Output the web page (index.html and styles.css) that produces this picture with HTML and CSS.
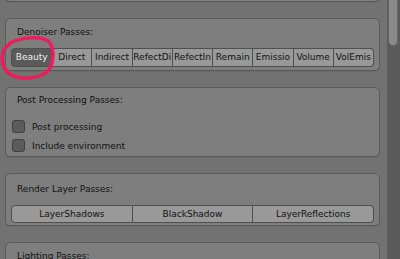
FILE: index.html
```html
<!DOCTYPE html>
<html lang="en">
<head>
    <meta charset="UTF-8">
    <title>Render Passes</title>
    <link rel="stylesheet" href="styles.css">
</head>
<body>
    <div class="content">
        <div class="box box-top"></div>

        <div class="box box-denoise">
            <div class="box-label">Denoiser Passes:</div>
            <div class="btn-row">
                <span class="btn active">Beauty</span>
                <span class="btn">Direct</span>
                <span class="btn">Indirect</span>
                <span class="btn">RefectDi</span>
                <span class="btn">RefectIn</span>
                <span class="btn">Remain</span>
                <span class="btn">Emissio</span>
                <span class="btn">Volume</span>
                <span class="btn">VolEmis</span>
            </div>
            <!-- hand drawn marker around the selected button -->
            <svg class="marker" width="60" height="50" viewBox="0 0 60 50">
                <path d="M10 7 C 22 1, 40 0, 48 5 C 54 10, 54 22, 51 30 C 47 39, 36 43, 22 42 C 12 41, 5 36, 3 28 C 1 20, 3 12, 10 8" fill="none" stroke="#ec1c5e" stroke-width="3.5" stroke-linecap="round"/>
            </svg>
        </div>

        <div class="box box-post">
            <div class="box-label">Post Processing Passes:</div>
            <label class="check"><span class="check-box"></span>Post processing</label>
            <label class="check"><span class="check-box"></span>Include environment</label>
        </div>

        <div class="box box-render">
            <div class="box-label">Render Layer Passes:</div>
            <div class="btn-row">
                <span class="btn">LayerShadows</span>
                <span class="btn">BlackShadow</span>
                <span class="btn">LayerReflections</span>
            </div>
        </div>

        <div class="box">
            <div class="box-label">Lighting Passes:</div>
        </div>
    </div>

    <div class="scrollbar">
        <div class="thumb"></div>
    </div>
</body>
</html>
```

FILE: styles.css
```css
html, body {
    margin: 0;
    height: 100%;
    overflow: hidden;
}

body {
    background-color: #727272;
    color: #111;
    font-family: "DejaVu Sans", sans-serif;
    font-size: 9px;
    display: flex;
}

.content {
    flex: 1;
    padding: 0 7px 0 5px;
}

.box {
    position: relative;
    background-color: #7e7e7e;
    border: 1px solid #5a5a5a;
    border-radius: 5px;
    padding: 5px 4px 3px 4px;
    margin-bottom: 16px;
    box-shadow: 0 1px 0 #6a6a6a;
}

.box-top {
    height: 10px;
    margin-top: -10px;
    padding: 0;
}

.box-label {
    height: 16px;
    line-height: 16px;
    padding-left: 7px;
    margin-bottom: 8px;
}

.box-post {
    padding-top: 4px;
    padding-bottom: 1px;
}

.box-post .box-label {
    margin-bottom: 9px;
}

.box-render {
    padding-top: 7px;
    padding-bottom: 2px;
}

.btn-row {
    display: flex;
    margin: 0 1px;
}

.btn {
    flex: 1;
    min-width: 0;
    height: 17px;
    line-height: 17px;
    background-color: #999;
    border: 1px solid #4f4f4f;
    border-left: none;
    text-align: center;
    white-space: nowrap;
    overflow: hidden;
}

.box-render .btn {
    height: 16px;
    line-height: 16px;
}

.btn:first-child {
    border-left: 1px solid #4f4f4f;
    border-radius: 4px 0 0 4px;
}

.btn:last-child {
    border-radius: 0 4px 4px 0;
}

.btn.active {
    background-color: #5a5a5a;
    color: #eee;
}

.marker {
    position: absolute;
    left: -6px;
    top: 17px;
    pointer-events: none;
}

.check {
    display: flex;
    align-items: center;
    height: 19px;
    padding-left: 2px;
}

.check-box {
    width: 11px;
    height: 11px;
    background-color: #5b5b5b;
    border: 1px solid #404040;
    border-radius: 3px;
    margin-right: 7px;
}

.scrollbar {
    width: 13px;
    background-color: #5a5a5a;
}

.thumb {
    width: 8px;
    height: 45px;
    margin-left: 1px;
    background-color: #8a8a8a;
    border: 1px solid #666;
    border-top: none;
    border-radius: 0 0 5px 5px;
}
```
